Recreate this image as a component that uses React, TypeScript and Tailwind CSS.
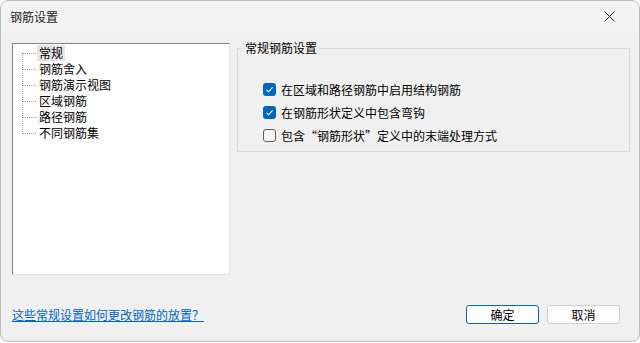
const font = { fontFamily: '"Noto Sans CJK SC", "Noto Sans", sans-serif' };

const treeItems = ["常规", "钢筋舍入", "钢筋演示视图", "区域钢筋", "路径钢筋", "不同钢筋集"];

const options = [
  { label: "在区域和路径钢筋中启用结构钢筋", checked: true },
  { label: "在钢筋形状定义中包含弯钩", checked: true },
  { label: "包含“钢筋形状”定义中的末端处理方式", checked: false },
];

function TreeRow({ text, index, last }: { text: string; index: number; last: boolean }) {
  const first = index === 0;
  return (
    <div className="flex h-[16px] items-center">
      <svg width="24" height="16" className="shrink-0">
        <line
          x1="9.5"
          y1={first ? 8 : 0}
          x2="9.5"
          y2={last ? 9 : 16}
          stroke="#a0a0a0"
          strokeDasharray="1 1"
        />
        <line x1="10" y1="8.5" x2="24" y2="8.5" stroke="#a0a0a0" strokeDasharray="1 1" />
      </svg>
      <span
        className={`px-[2px] text-[12px] leading-[16px] text-black ${first ? "bg-[#e5e5e5]" : ""}`}
      >
        {text}
      </span>
    </div>
  );
}

function CheckBox({ checked }: { checked: boolean }) {
  if (checked) {
    return (
      <span className="flex h-[13px] w-[13px] shrink-0 items-center justify-center rounded-[3px] bg-[#0067c0]">
        <svg width="9" height="9" viewBox="0 0 9 9">
          <path d="M1.5 4.8 L3.6 6.8 L7.6 2.4" fill="none" stroke="white" strokeWidth="1.1" />
        </svg>
      </span>
    );
  }
  return (
    <span className="h-[13px] w-[13px] shrink-0 rounded-[3px] border border-[#5f5f5f] bg-[#f7f7f7]" />
  );
}

export default function App() {
  return (
    <div style={font} className="h-[343px] w-[640px] bg-white">
      <div className="flex h-[342px] w-[640px] flex-col overflow-hidden rounded-lg border border-[#bdbdbd] bg-[#f0f0f0]">
        <div className="flex h-[31px] shrink-0 items-center justify-between bg-[#f3f3f3] pl-[9px] pr-[24px]">
          <span className="text-[12px] text-[#1b1b1b]">钢筋设置</span>
          <svg width="11" height="11" viewBox="0 0 11 11">
            <path d="M0.5 0.5 L10.5 10.5 M10.5 0.5 L0.5 10.5" stroke="#222" strokeWidth="1" />
          </svg>
        </div>

        <div className="flex items-start gap-[7px] pl-[11px] pt-[8px]">
          <div className="mt-[3px] h-[232px] w-[218px] shrink-0 border border-b-[#e3e3e3] border-l-[#828282] border-r-[#e3e3e3] border-t-[#828282] bg-white pt-[1px]">
            {treeItems.map((t, i) => (
              <TreeRow key={t} text={t} index={i} last={i === treeItems.length - 1} />
            ))}
          </div>

          <fieldset className="w-[393px] border border-[#dcdcdc] pb-[4px] pt-[22px]">
            <legend className="ml-[5px] px-[2px] text-[12px] leading-[16px] text-black">常规钢筋设置</legend>
            <div className="pl-[25px]">
              {options.map((o) => (
                <div key={o.label} className="flex h-[23px] items-center gap-[5px]">
                  <CheckBox checked={o.checked} />
                  <span className="text-[12px] text-black">{o.label}</span>
                </div>
              ))}
            </div>
          </fieldset>
        </div>

        <div className="mt-[30px] flex items-center justify-between pl-[11px] pr-[19px]">
          <a href="#" className="whitespace-nowrap text-[12px] leading-[16px] text-[#0066cc] underline">
            这些常规设置如何更改钢筋的放置？
          </a>
          <div className="flex gap-[8px]">
            <button className="h-[19px] w-[73px] rounded-[3px] border border-[#0067c0] bg-[#fdfdfd] text-[12px] text-black">
              确定
            </button>
            <button className="h-[19px] w-[73px] rounded-[3px] border border-[#d0d0d0] bg-[#fdfdfd] text-[12px] text-black">
              取消
            </button>
          </div>
        </div>
      </div>
    </div>
  );
}
